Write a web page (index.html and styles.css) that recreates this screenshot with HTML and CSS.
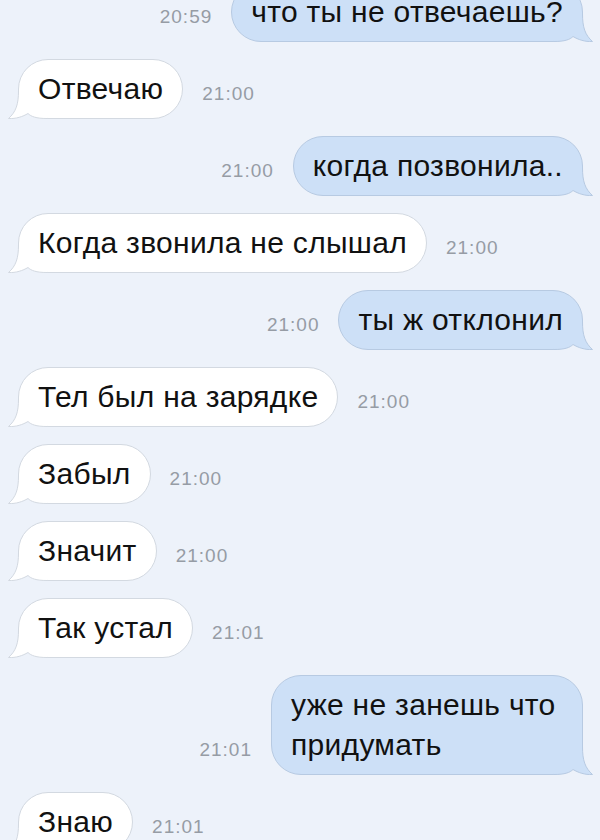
FILE: index.html
```html
<!DOCTYPE html>
<html>
<head>
    <meta charset="UTF-8">
    <title>Чат</title>
    <link rel="stylesheet" href="styles.css">
</head>
<body>
    <div class="chat">
        <div class="row out">
            <span class="time">20:59</span>
            <div class="bubble">что ты не отвечаешь?<svg class="tail" viewBox="0 0 40 30"><path class="fill" d="M11.5 0 L11.5 2 C11.5 15 9 23 1.5 29.5 C9 30 16 27.5 21 24.5 C24 27.5 29 29.5 40 29.5 L40 0 Z"/><path class="line" d="M11.5 0 L11.5 2 C11.5 15 9 23 1.5 29.5 C9 30 16 27.5 21 24.5 C24 27.5 29 29.5 40 29.5"/></svg></div>
        </div>
        <div class="row in">
            <div class="bubble">Отвечаю<svg class="tail" viewBox="0 0 40 30"><path class="fill" d="M11.5 0 L11.5 2 C11.5 15 9 23 1.5 29.5 C9 30 16 27.5 21 24.5 C24 27.5 29 29.5 40 29.5 L40 0 Z"/><path class="line" d="M11.5 0 L11.5 2 C11.5 15 9 23 1.5 29.5 C9 30 16 27.5 21 24.5 C24 27.5 29 29.5 40 29.5"/></svg></div>
            <span class="time">21:00</span>
        </div>
        <div class="row out">
            <span class="time">21:00</span>
            <div class="bubble">когда позвонила..<svg class="tail" viewBox="0 0 40 30"><path class="fill" d="M11.5 0 L11.5 2 C11.5 15 9 23 1.5 29.5 C9 30 16 27.5 21 24.5 C24 27.5 29 29.5 40 29.5 L40 0 Z"/><path class="line" d="M11.5 0 L11.5 2 C11.5 15 9 23 1.5 29.5 C9 30 16 27.5 21 24.5 C24 27.5 29 29.5 40 29.5"/></svg></div>
        </div>
        <div class="row in">
            <div class="bubble">Когда звонила не слышал<svg class="tail" viewBox="0 0 40 30"><path class="fill" d="M11.5 0 L11.5 2 C11.5 15 9 23 1.5 29.5 C9 30 16 27.5 21 24.5 C24 27.5 29 29.5 40 29.5 L40 0 Z"/><path class="line" d="M11.5 0 L11.5 2 C11.5 15 9 23 1.5 29.5 C9 30 16 27.5 21 24.5 C24 27.5 29 29.5 40 29.5"/></svg></div>
            <span class="time">21:00</span>
        </div>
        <div class="row out">
            <span class="time">21:00</span>
            <div class="bubble">ты ж отклонил<svg class="tail" viewBox="0 0 40 30"><path class="fill" d="M11.5 0 L11.5 2 C11.5 15 9 23 1.5 29.5 C9 30 16 27.5 21 24.5 C24 27.5 29 29.5 40 29.5 L40 0 Z"/><path class="line" d="M11.5 0 L11.5 2 C11.5 15 9 23 1.5 29.5 C9 30 16 27.5 21 24.5 C24 27.5 29 29.5 40 29.5"/></svg></div>
        </div>
        <div class="row in">
            <div class="bubble">Тел был на зарядке<svg class="tail" viewBox="0 0 40 30"><path class="fill" d="M11.5 0 L11.5 2 C11.5 15 9 23 1.5 29.5 C9 30 16 27.5 21 24.5 C24 27.5 29 29.5 40 29.5 L40 0 Z"/><path class="line" d="M11.5 0 L11.5 2 C11.5 15 9 23 1.5 29.5 C9 30 16 27.5 21 24.5 C24 27.5 29 29.5 40 29.5"/></svg></div>
            <span class="time">21:00</span>
        </div>
        <div class="row in">
            <div class="bubble">Забыл<svg class="tail" viewBox="0 0 40 30"><path class="fill" d="M11.5 0 L11.5 2 C11.5 15 9 23 1.5 29.5 C9 30 16 27.5 21 24.5 C24 27.5 29 29.5 40 29.5 L40 0 Z"/><path class="line" d="M11.5 0 L11.5 2 C11.5 15 9 23 1.5 29.5 C9 30 16 27.5 21 24.5 C24 27.5 29 29.5 40 29.5"/></svg></div>
            <span class="time">21:00</span>
        </div>
        <div class="row in">
            <div class="bubble">Значит<svg class="tail" viewBox="0 0 40 30"><path class="fill" d="M11.5 0 L11.5 2 C11.5 15 9 23 1.5 29.5 C9 30 16 27.5 21 24.5 C24 27.5 29 29.5 40 29.5 L40 0 Z"/><path class="line" d="M11.5 0 L11.5 2 C11.5 15 9 23 1.5 29.5 C9 30 16 27.5 21 24.5 C24 27.5 29 29.5 40 29.5"/></svg></div>
            <span class="time">21:00</span>
        </div>
        <div class="row in">
            <div class="bubble">Так устал<svg class="tail" viewBox="0 0 40 30"><path class="fill" d="M11.5 0 L11.5 2 C11.5 15 9 23 1.5 29.5 C9 30 16 27.5 21 24.5 C24 27.5 29 29.5 40 29.5 L40 0 Z"/><path class="line" d="M11.5 0 L11.5 2 C11.5 15 9 23 1.5 29.5 C9 30 16 27.5 21 24.5 C24 27.5 29 29.5 40 29.5"/></svg></div>
            <span class="time">21:01</span>
        </div>
        <div class="row out">
            <span class="time">21:01</span>
            <div class="bubble wide">уже не занешь что придумать<svg class="tail" viewBox="0 0 40 30"><path class="fill" d="M11.5 0 L11.5 2 C11.5 15 9 23 1.5 29.5 C9 30 16 27.5 21 24.5 C24 27.5 29 29.5 40 29.5 L40 0 Z"/><path class="line" d="M11.5 0 L11.5 2 C11.5 15 9 23 1.5 29.5 C9 30 16 27.5 21 24.5 C24 27.5 29 29.5 40 29.5"/></svg></div>
        </div>
        <div class="row in">
            <div class="bubble">Знаю<svg class="tail" viewBox="0 0 40 30"><path class="fill" d="M11.5 0 L11.5 2 C11.5 15 9 23 1.5 29.5 C9 30 16 27.5 21 24.5 C24 27.5 29 29.5 40 29.5 L40 0 Z"/><path class="line" d="M11.5 0 L11.5 2 C11.5 15 9 23 1.5 29.5 C9 30 16 27.5 21 24.5 C24 27.5 29 29.5 40 29.5"/></svg></div>
            <span class="time">21:01</span>
        </div>
    </div>
</body>
</html>
```

FILE: styles.css
```css
html, body {
    margin: 0;
    padding: 0;
    background-color: #edf2fa;
    overflow: hidden;
}
body {
    font-family: "Liberation Sans", Arial, sans-serif;
    color: #111;
}
.chat {
    display: flex;
    flex-direction: column;
    gap: 17px;
    margin-top: -18px;
    padding: 0 17px 0 18px;
}
.row {
    display: flex;
    align-items: flex-end;
    gap: 19px;
}
.row.out {
    justify-content: flex-end;
}
.bubble {
    position: relative;
    z-index: 0;
    padding: 9px 19px;
    font-size: 30px;
    letter-spacing: 0.3px;
    line-height: 40px;
    border-radius: 30px;
    border: 1px solid #d3d9e1;
    background-color: #fff;
}
.out .bubble {
    background-color: #cde0f7;
    border-color: #b7cae2;
}
.bubble.wide {
    max-width: 272px;
}
.time {
    font-size: 19px;
    line-height: 22px;
    letter-spacing: 1px;
    color: #969ca5;
    margin-bottom: 14px;
    white-space: nowrap;
}
.tail {
    position: absolute;
    z-index: -1;
    bottom: -1px;
    left: -12px;
    width: 40px;
    height: 30px;
}
.out .tail {
    left: auto;
    right: -12px;
    transform: scaleX(-1);
}
.tail .fill {
    fill: #fff;
}
.tail .line {
    fill: none;
    stroke: #d3d9e1;
    stroke-width: 1;
}
.out .tail .fill {
    fill: #cde0f7;
}
.out .tail .line {
    stroke: #b7cae2;
}
```
